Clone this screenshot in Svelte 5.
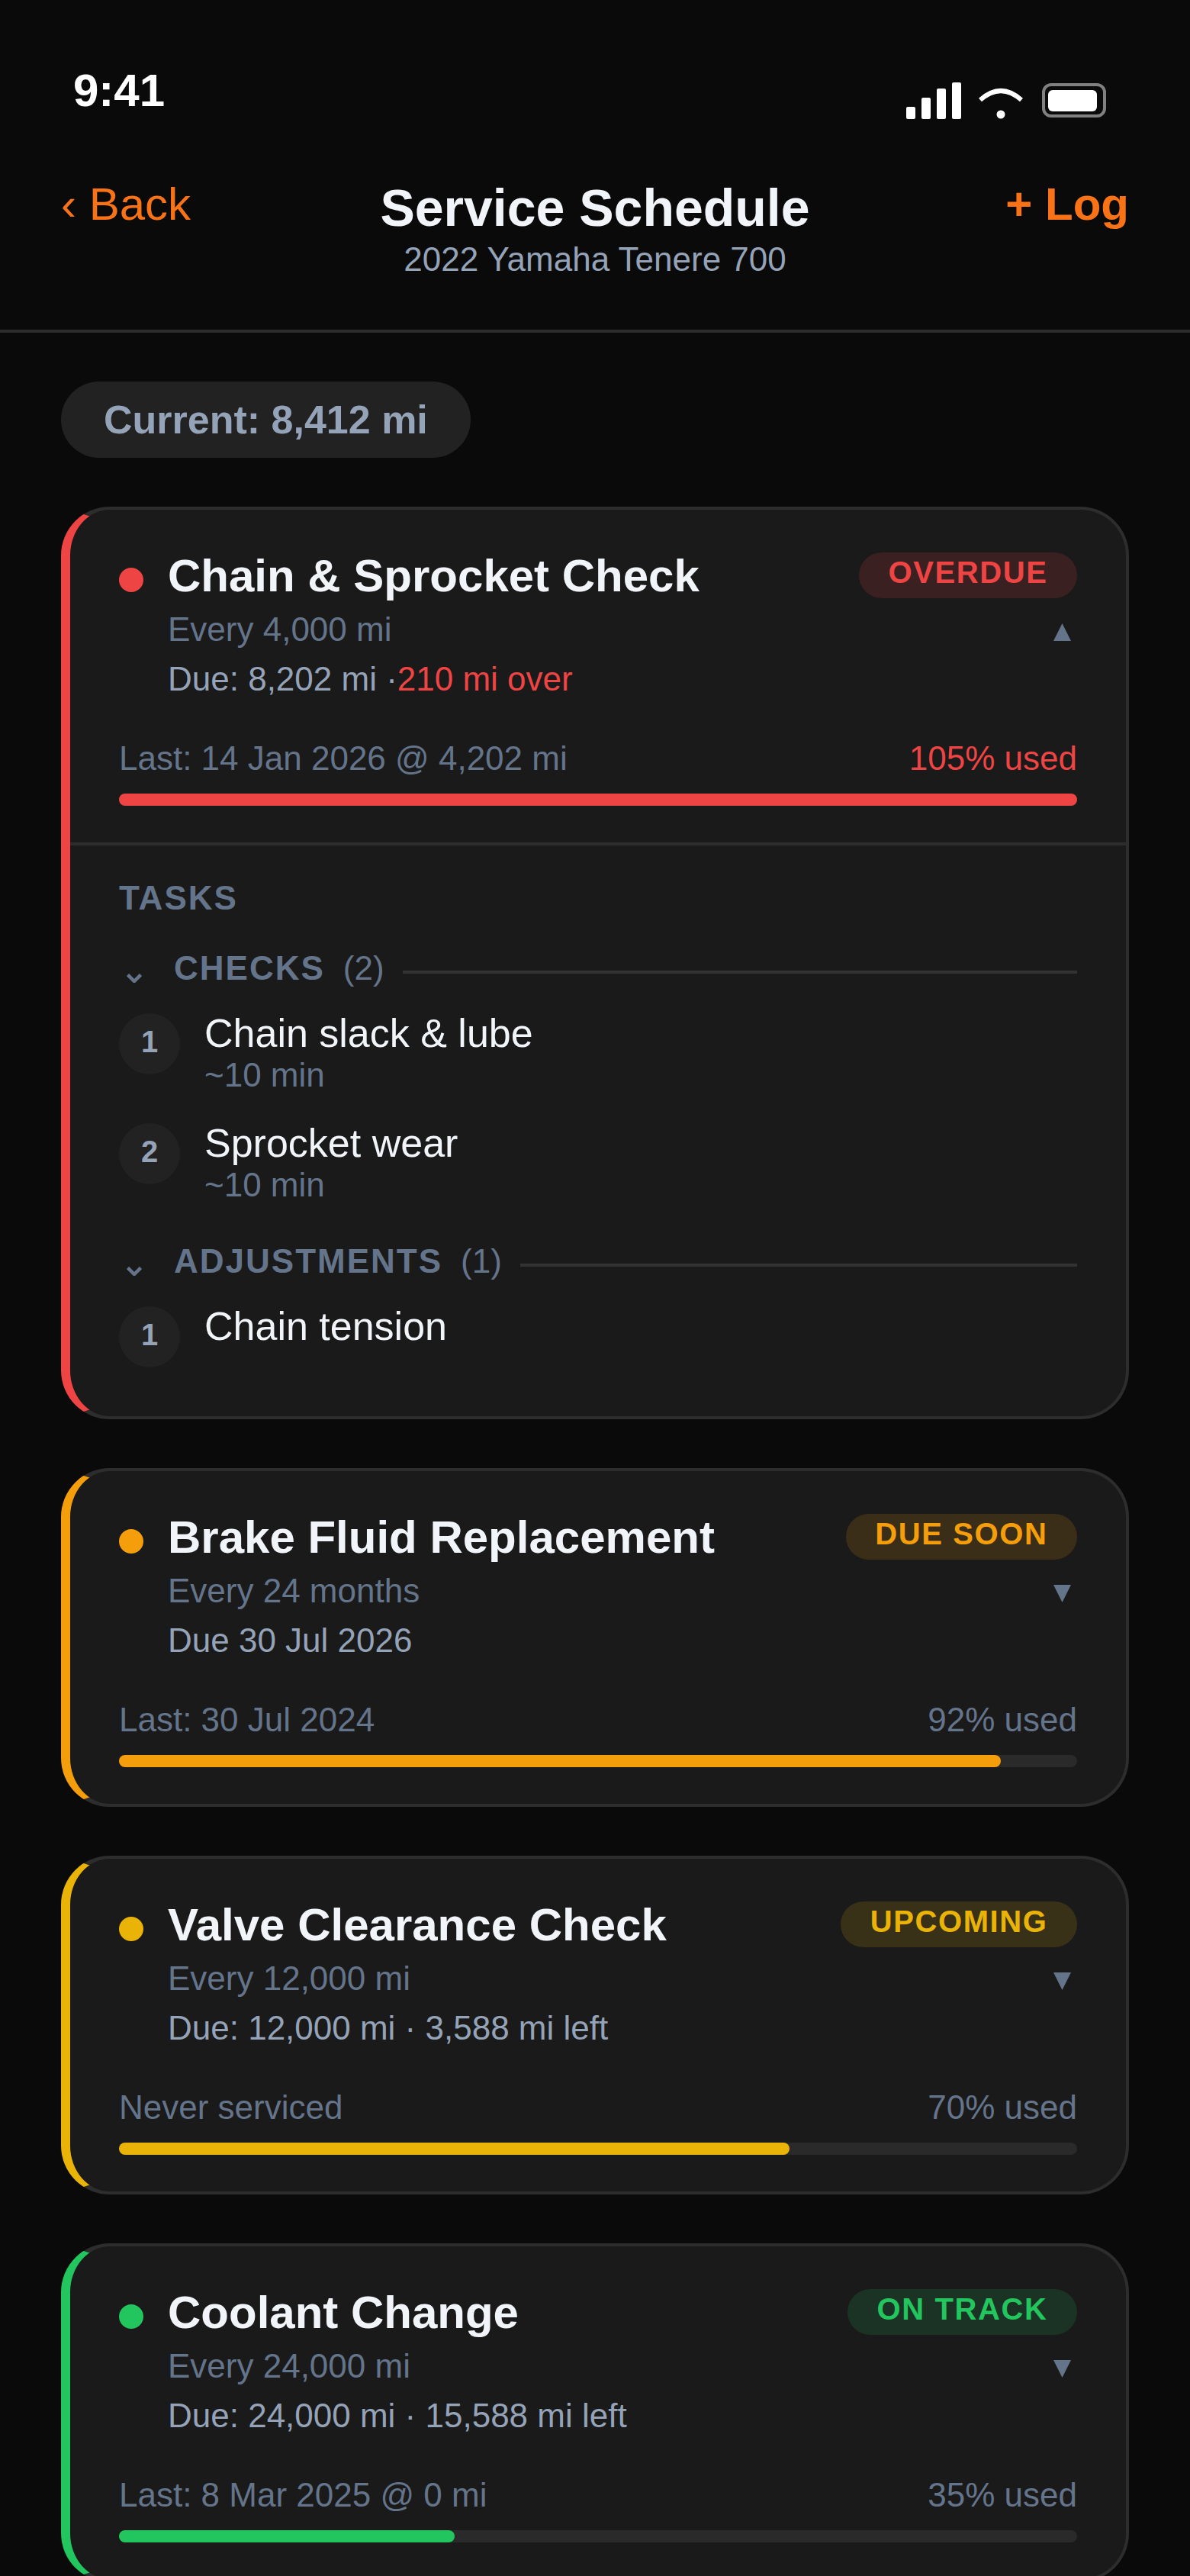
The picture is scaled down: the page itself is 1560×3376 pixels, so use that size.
<script lang="ts">
  interface Task { name: string; time?: string }
  interface Group { label: string; tasks: Task[] }
  interface Item {
    title: string;
    status: string;
    badge: string;
    every: string;
    due: string;
    over?: string;
    last: string;
    used: number;
    groups?: Group[];
  }

  const items: Item[] = [
    {
      title: 'Chain & Sprocket Check',
      status: 'overdue',
      badge: 'OVERDUE',
      every: 'Every 4,000 mi',
      due: 'Due: 8,202 mi ·',
      over: '210 mi over',
      last: 'Last: 14 Jan 2026 @ 4,202 mi',
      used: 105,
      groups: [
        {
          label: 'CHECKS',
          tasks: [
            { name: 'Chain slack & lube', time: '~10 min' },
            { name: 'Sprocket wear', time: '~10 min' }
          ]
        },
        { label: 'ADJUSTMENTS', tasks: [{ name: 'Chain tension' }] }
      ]
    },
    {
      title: 'Brake Fluid Replacement',
      status: 'soon',
      badge: 'DUE SOON',
      every: 'Every 24 months',
      due: 'Due 30 Jul 2026',
      last: 'Last: 30 Jul 2024',
      used: 92
    },
    {
      title: 'Valve Clearance Check',
      status: 'upcoming',
      badge: 'UPCOMING',
      every: 'Every 12,000 mi',
      due: 'Due: 12,000 mi · 3,588 mi left',
      last: 'Never serviced',
      used: 70
    },
    {
      title: 'Coolant Change',
      status: 'ok',
      badge: 'ON TRACK',
      every: 'Every 24,000 mi',
      due: 'Due: 24,000 mi · 15,588 mi left',
      last: 'Last: 8 Mar 2025 @ 0 mi',
      used: 35
    }
  ];
</script>

<div class="screen">
  <div class="status-bar">
    <span class="time">9:41</span>
    <div class="status-icons">
      <svg class="signal" viewBox="0 0 72 48" aria-hidden="true">
        <rect x="0" y="32" width="12" height="16" rx="2" />
        <rect x="20" y="20" width="12" height="28" rx="2" />
        <rect x="40" y="8" width="12" height="40" rx="2" />
        <rect x="60" y="0" width="12" height="48" rx="2" />
      </svg>
      <svg class="wifi" viewBox="0 0 66 48" aria-hidden="true">
        <path d="M5 23 Q32 -1 59 23" fill="none" stroke="#fff" stroke-width="6" />
        <circle cx="32" cy="42" r="5.5" fill="#fff" />
      </svg>
      <div class="battery"><div class="battery-fill"></div></div>
    </div>
  </div>

  <header class="header">
    <span class="back">‹ Back</span>
    <div class="heading">
      <h1>Service Schedule</h1>
      <p>2022 Yamaha Tenere 700</p>
    </div>
    <span class="log">+ Log</span>
  </header>

  <main class="content">
    <div class="current">Current: 8,412 mi</div>

    <div class="cards">
      {#each items as item}
        <section class="card {item.status}">
          <div class="summary">
            <div class="top-row">
              <span class="dot"></span>
              <div class="info">
                <h2>{item.title}</h2>
                <div class="every">{item.every}</div>
                <div class="due">{item.due}{#if item.over}<span class="over">{item.over}</span>{/if}</div>
              </div>
              <div class="side">
                <span class="badge">{item.badge}</span>
                <svg class="caret" viewBox="0 0 23 23" aria-hidden="true">
                  {#if item.groups}
                    <polygon points="0,23 23,23 11.5,0" />
                  {:else}
                    <polygon points="0,0 23,0 11.5,23" />
                  {/if}
                </svg>
              </div>
            </div>
            <div class="usage">
              <span>{item.last}</span>
              <span class="used">{item.used}% used</span>
            </div>
            <div class="bar">
              <div class="fill" style="width: {Math.min(item.used, 100)}%"></div>
            </div>
          </div>

          {#if item.groups}
            <div class="tasks">
              <div class="tasks-title">TASKS</div>
              {#each item.groups as group}
                <div class="group">
                  <div class="group-head">
                    <svg class="chevron" viewBox="0 0 20 12" aria-hidden="true">
                      <polyline points="1.5,1.5 10,10 18.5,1.5" />
                    </svg>
                    <span class="group-label">{group.label}</span>
                    <span class="group-count">({group.tasks.length})</span>
                    <span class="group-line"></span>
                  </div>
                  {#each group.tasks as task, i}
                    <div class="task">
                      <span class="num">{i + 1}</span>
                      <div>
                        <div class="task-name">{task.name}</div>
                        {#if task.time}
                          <div class="task-time">{task.time}</div>
                        {/if}
                      </div>
                    </div>
                  {/each}
                </div>
              {/each}
            </div>
          {/if}
        </section>
      {/each}
    </div>
  </main>
</div>

<style>
  :global(body) {
    background: #0a0a0a;
  }

  .screen {
    width: 1560px;
    height: 3376px;
    overflow: hidden;
    background: #0a0a0a;
    color: #f1f5f9;
    font-family: "Liberation Sans", Arial, sans-serif;
  }

  .status-bar {
    display: flex;
    justify-content: space-between;
    align-items: flex-start;
    padding: 84px 110px 77px 96px;
  }

  .time {
    font-size: 60px;
    font-weight: 700;
    color: #fff;
  }

  .status-icons {
    display: flex;
    align-items: flex-start;
    gap: 20px;
    margin-top: 24px;
  }

  .signal {
    width: 72px;
    height: 48px;
    fill: #fff;
  }

  .wifi {
    width: 66px;
    height: 48px;
  }

  .battery {
    box-sizing: border-box;
    width: 84px;
    height: 45px;
    margin-top: 1px;
    padding: 5px 8px 4px 4px;
    border: 4px solid #808080;
    border-radius: 12px;
  }

  .battery-fill {
    height: 100%;
    background: #fff;
    border-radius: 6px;
  }

  .header {
    display: grid;
    grid-template-columns: 1fr auto 1fr;
    align-items: start;
    padding: 0 80px 67px;
    border-bottom: 4px solid #2d2d2d;
  }

  .back {
    font-size: 60px;
    color: #f97316;
  }

  .log {
    justify-self: end;
    font-size: 60px;
    font-weight: 700;
    color: #f97316;
  }

  .heading {
    text-align: center;
  }

  h1 {
    margin: 0;
    font-size: 68px;
    font-weight: 700;
  }

  .heading p {
    margin: 4px 0 0;
    font-size: 44px;
    color: #94a3b8;
  }

  .content {
    padding: 64px 80px;
  }

  .current {
    display: inline-block;
    padding: 20px 56px;
    border-radius: 50px;
    background: #222;
    color: #94a3b8;
    font-size: 52px;
    font-weight: 700;
    vertical-align: top;
  }

  .cards {
    display: flex;
    flex-direction: column;
    gap: 64px;
    margin-top: 64px;
  }

  .card {
    border: 4px solid #2d2d2d;
    border-left: 12px solid var(--accent);
    border-radius: 64px;
    background: #1a1a1a;
  }

  .overdue { --accent: #ef4444; --badge-bg: rgba(239, 68, 68, 0.15); }
  .soon { --accent: #f59e0b; --badge-bg: rgba(245, 158, 11, 0.15); }
  .upcoming { --accent: #eab308; --badge-bg: rgba(234, 179, 8, 0.15); }
  .ok { --accent: #22c55e; --badge-bg: rgba(34, 197, 94, 0.15); }

  .summary {
    padding: 56px 64px 48px;
  }

  .top-row {
    display: flex;
    align-items: flex-start;
  }

  .dot {
    flex-shrink: 0;
    width: 32px;
    height: 32px;
    margin: 20px 32px 0 0;
    border-radius: 50%;
    background: var(--accent);
  }

  .info {
    flex: 1;
  }

  h2 {
    margin: 0;
    font-size: 60px;
    line-height: 62px;
    font-weight: 700;
  }

  .every {
    margin-top: 14px;
    font-size: 44px;
    color: #64748b;
  }

  .due {
    margin-top: 15px;
    font-size: 44px;
    color: #94a3b8;
  }

  .over {
    color: #ef4444;
  }

  .side {
    display: flex;
    flex-direction: column;
    align-items: flex-end;
  }

  .badge {
    padding: 4px 38.5px 11px;
    border-radius: 30px;
    background: var(--badge-bg);
    color: var(--accent);
    font-size: 40px;
    font-weight: 700;
    letter-spacing: 1.6px;
  }

  .caret {
    width: 23px;
    height: 23px;
    margin: 33px 8px 0 0;
    fill: #64748b;
  }

  .usage {
    display: flex;
    justify-content: space-between;
    margin-top: 54px;
    font-size: 44px;
    color: #64748b;
  }

  .overdue .used {
    color: #ef4444;
  }

  .bar {
    height: 16px;
    margin-top: 21px;
    border-radius: 8px;
    background: #2a2a2a;
  }

  .fill {
    height: 100%;
    border-radius: 8px;
    background: var(--accent);
  }

  .tasks {
    padding: 44px 64px 64px;
    border-top: 4px solid #2d2d2d;
  }

  .tasks-title,
  .group-label {
    font-size: 44px;
    font-weight: 700;
    letter-spacing: 2px;
    color: #64748b;
  }

  .group {
    margin-top: 42px;
  }

  .group + .group {
    margin-top: 50px;
  }

  .group-head {
    display: flex;
    align-items: center;
    margin-bottom: 30px;
    color: #64748b;
    font-size: 44px;
  }

  .chevron {
    flex-shrink: 0;
    width: 20px;
    height: 12px;
    margin: 26px 42px 0 10px;
    fill: none;
    stroke: #64748b;
    stroke-width: 4.5;
  }

  .group-count {
    margin-left: 24px;
  }

  .group-line {
    flex: 1;
    height: 4px;
    margin: 10px 0 0 24px;
    background: #333;
  }

  .task {
    display: flex;
    gap: 32px;
    margin-bottom: 34px;
  }

  .task:last-child {
    margin-bottom: 0;
  }

  .num {
    flex-shrink: 0;
    box-sizing: border-box;
    display: flex;
    align-items: center;
    justify-content: center;
    width: 80px;
    height: 80px;
    margin-top: 4px;
    padding-bottom: 5px;
    border-radius: 50%;
    background: #222;
    color: #94a3b8;
    font-size: 40px;
    font-weight: 700;
  }

  .task-name {
    font-size: 52px;
    color: #f1f5f9;
  }

  .task-time {
    font-size: 44px;
    color: #64748b;
  }
</style>
